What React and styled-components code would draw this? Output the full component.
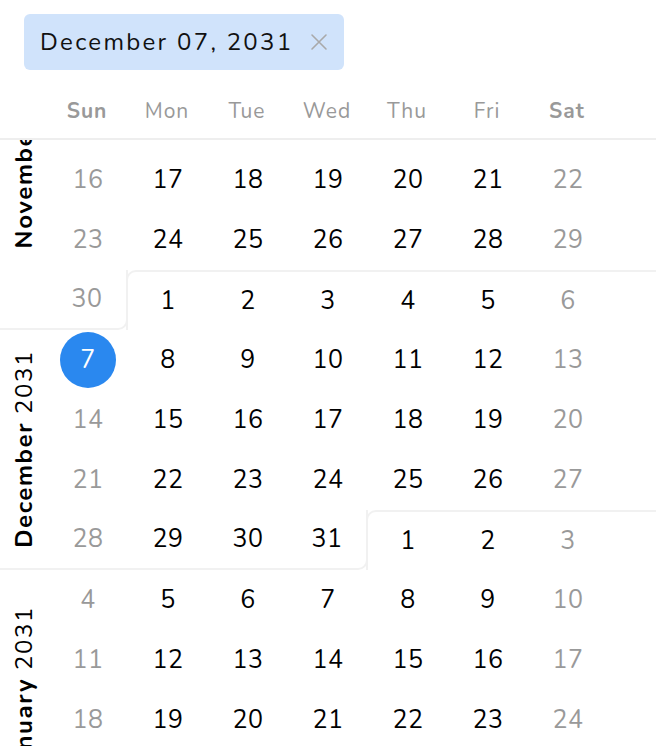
import React from 'react'
import styled, { createGlobalStyle } from 'styled-components'

const GlobalStyle = createGlobalStyle`
    body {
        margin: 0;
        background: #fff;
        font-family: "Nunito", "Lato", "Open Sans", sans-serif;
    }
`

const DAYS = ['Sun', 'Mon', 'Tue', 'Wed', 'Thu', 'Fri', 'Sat']

// sempre a mesma grade: coluna do rotulo, 7 dias, sobra
const COLUNAS = '48px repeat(7, 80px) 1fr'
const LINHA = '#f1f1f1'

const meses = [
    { nome: 'November', ano: '2031', mes: 10, de: 1, ate: 6 },
    { nome: 'December', ano: '2031', mes: 11, de: 7, ate: 10 },
    { nome: 'January', ano: '2031', mes: 0, de: 11, ate: 14 },
]

const selecionado = new Date(2031, 11, 7)

const montaSemanas = () => {
    const inicio = new Date(2031, 9, 26)
    const semanas = []
    for (let r = 0; r < 14; r++) {
        const dias = []
        for (let c = 0; c < 7; c++) {
            const d = new Date(inicio)
            d.setDate(inicio.getDate() + r * 7 + c)
            dias.push(d)
        }
        semanas.push(dias)
    }
    return semanas
}

const Calendario = () => {
    const semanas = montaSemanas()

    return (
        <Pagina>
            <Topo>
                <Chip>
                    <span>December 07, 2031</span>
                    <Limpar width="18" height="18" viewBox="0 0 18 18">
                        <path d="M2 2 L16 16 M16 2 L2 16" stroke="currentColor" strokeWidth="1.6" strokeLinecap="round" />
                    </Limpar>
                </Chip>
            </Topo>
            <Cabecalho>
                <span />
                {DAYS.map((d, i) => (
                    <DiaSemana key={d} forte={i === 0 || i === 6}>{d}</DiaSemana>
                ))}
            </Cabecalho>
            <Janela>
                <Grade>
                    {meses.map((m, i) => (
                        <Rotulo key={m.nome} de={m.de} ate={m.ate} ultimo={i === meses.length - 1}>
                            <RotuloTexto><b>{m.nome}</b> {m.ano}</RotuloTexto>
                        </Rotulo>
                    ))}
                    {semanas.map((dias, r) => {
                        // linha de transicao: tem um dia 1 fora do domingo
                        const k = r > 0 ? dias.findIndex(d => d.getDate() === 1) : -1
                        const transicao = k > 0
                        return (
                            <React.Fragment key={r}>
                                {dias.map((d, c) => {
                                    if (d.getMonth() === 9) return null
                                    let borda = null
                                    if (transicao) {
                                        if (c < k) borda = c === k - 1 ? 'fimCanto' : 'fim'
                                        else borda = c === k ? 'inicioCanto' : 'inicio'
                                    }
                                    const fimDeSemana = c === 0 || c === 6
                                    const ativo = d.getTime() === selecionado.getTime()
                                    return (
                                        <Dia key={c} linha={r + 1} coluna={c + 2} borda={borda} cinza={fimDeSemana}>
                                            {ativo ? <Selecionado>{d.getDate()}</Selecionado> : d.getDate()}
                                        </Dia>
                                    )
                                })}
                                {transicao && <Sobra linha={r + 1} />}
                            </React.Fragment>
                        )
                    })}
                </Grade>
            </Janela>
        </Pagina>
    )
}

const Pagina = styled.div`
    width: 656px;
    height: 746px;
    overflow: hidden;
    display: flex;
    flex-direction: column;
`

const Topo = styled.div`
    padding: 14px 24px 0 24px;
`

const Chip = styled.div`
    display: inline-flex;
    align-items: center;
    gap: 17px;
    height: 56px;
    padding: 0 16px;
    box-sizing: border-box;
    background: #d0e3fb;
    border-radius: 6px;
    font-size: 24px;
    letter-spacing: 2.3px;
    color: #111;
`

const Limpar = styled.svg`
    color: #a9a9a9;
    display: block;
`

const Cabecalho = styled.div`
    display: grid;
    grid-template-columns: ${COLUNAS};
    align-items: center;
    height: 54px;
    margin-top: 14px;
    border-bottom: 2px solid #eee;
`

const DiaSemana = styled.span`
    text-align: center;
    font-size: 21px;
    letter-spacing: 1px;
    color: #999;
    font-weight: ${p => (p.forte ? 700 : 400)};
    margin-left: -2px;
`

const Janela = styled.div`
    flex: 1;
    overflow: hidden;
`

const Grade = styled.div`
    display: grid;
    grid-template-columns: ${COLUNAS};
    grid-auto-rows: 60px;
    margin-top: -170px;
`

const Rotulo = styled.div`
    grid-column: 1;
    grid-row: ${p => p.de} / ${p => p.ate + 1};
    display: flex;
    align-items: center;
    justify-content: center;
    box-sizing: border-box;
    border-bottom: ${p => (p.ultimo ? 'none' : `2px solid ${LINHA}`)};
`

const RotuloTexto = styled.span`
    writing-mode: vertical-rl;
    transform: rotate(180deg);
    white-space: nowrap;
    font-size: 24px;
    letter-spacing: 1.6px;
    color: #000;
    b {
        font-weight: 700;
    }
`

const bordas = {
    fim: `border-bottom: 2px solid ${LINHA};`,
    fimCanto: `
        border-bottom: 2px solid ${LINHA};
        border-right: 2px solid ${LINHA};
        border-bottom-right-radius: 10px;
    `,
    inicio: `border-top: 2px solid ${LINHA};`,
    inicioCanto: `
        border-top: 2px solid ${LINHA};
        border-left: 2px solid ${LINHA};
        border-top-left-radius: 10px;
        margin-left: -2px;
    `,
}

const Dia = styled.div`
    grid-row: ${p => p.linha};
    grid-column: ${p => p.coluna};
    display: flex;
    align-items: center;
    justify-content: center;
    box-sizing: border-box;
    font-size: 25px;
    letter-spacing: 0.5px;
    color: ${p => (p.cinza ? '#999' : '#000')};
    ${p => (p.borda ? bordas[p.borda] : '')}
`

const Sobra = styled.div`
    grid-row: ${p => p.linha};
    grid-column: 9;
    border-top: 2px solid ${LINHA};
`

const Selecionado = styled.span`
    width: 56px;
    height: 56px;
    border-radius: 50%;
    background: #2a88ef;
    color: #fff;
    display: flex;
    align-items: center;
    justify-content: center;
`

export default function App() {
    return (
        <>
            <GlobalStyle />
            <Calendario />
        </>
    )
}
